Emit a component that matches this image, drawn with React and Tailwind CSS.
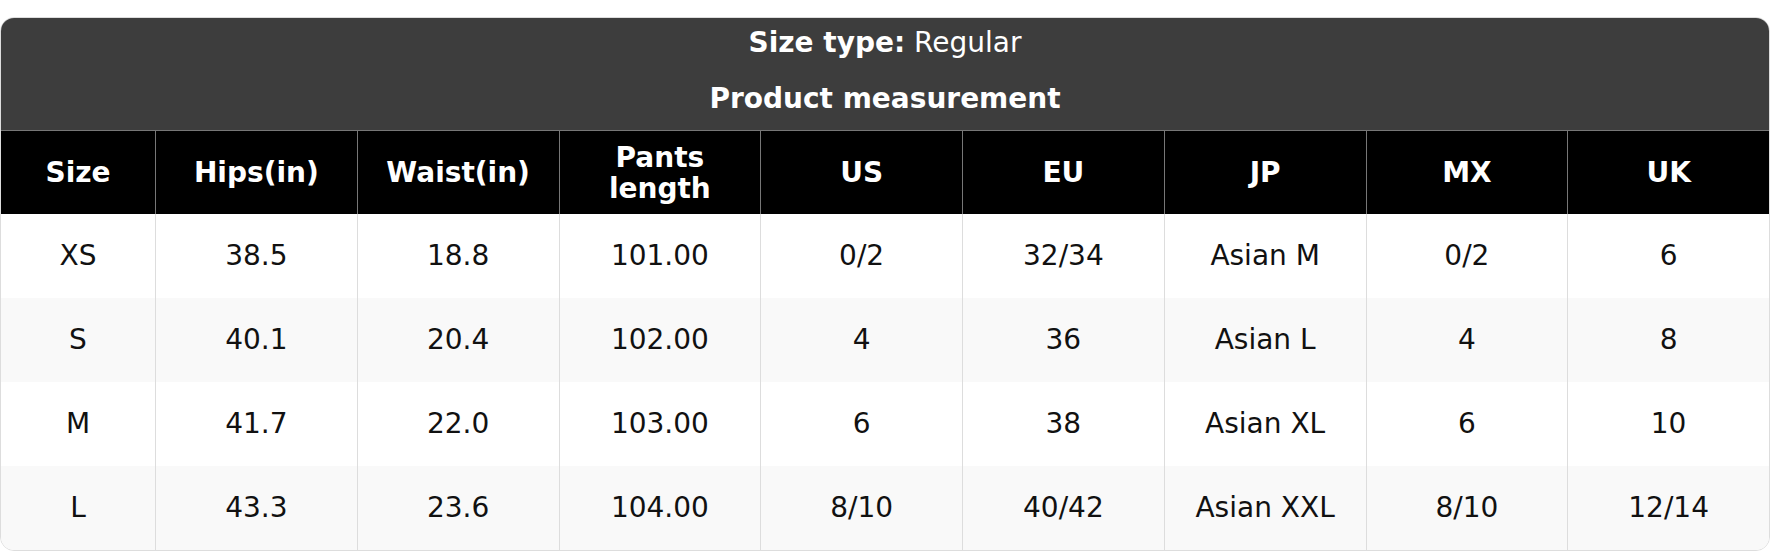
import React from 'react';

const headers = ['Size', 'Hips(in)', 'Waist(in)', 'Pants length', 'US', 'EU', 'JP', 'MX', 'UK'];

const rows = [
  ['XS', '38.5', '18.8', '101.00', '0/2', '32/34', 'Asian M', '0/2', '6'],
  ['S', '40.1', '20.4', '102.00', '4', '36', 'Asian L', '4', '8'],
  ['M', '41.7', '22.0', '103.00', '6', '38', 'Asian XL', '6', '10'],
  ['L', '43.3', '23.6', '104.00', '8/10', '40/42', 'Asian XXL', '8/10', '12/14'],
];

export default function App() {
  return (
    <div className="w-[1770px] h-[552px] bg-white pt-[17px] font-['DejaVu_Sans',sans-serif] text-[28px] leading-[32px]">
      <div className="rounded-[14px] overflow-hidden border border-[#dddddd]">
        <div className="bg-[#3d3d3d] text-white text-center pt-[9px] pb-[15px] flex flex-col gap-[24px]">
          <div>
            <span className="font-bold">Size type:</span> Regular
          </div>
          <div className="font-bold">Product measurement</div>
        </div>

        <div className="flex h-[84px] bg-black text-white font-bold border-t border-[#777777]">
          {headers.map((h, i) => (
            <div
              key={h}
              className={`flex items-center justify-center text-center px-2 leading-[31px] ${i === 0 ? 'w-[154px] shrink-0' : 'flex-1 border-l border-[#777777]'}`}
            >
              {h === 'Pants length' ? <span className="w-[110px]">Pants length</span> : h}
            </div>
          ))}
        </div>

        {rows.map((r, ri) => (
          <div key={r[0]} className={`flex h-[84px] text-[#111111] ${ri % 2 === 1 ? 'bg-[#f9f9f9]' : 'bg-white'}`}>
            {r.map((c, i) => (
              <div
                key={i}
                className={`flex items-center justify-center ${i === 0 ? 'w-[154px] shrink-0' : 'flex-1 border-l border-[#dddddd]'}`}
              >
                {c}
              </div>
            ))}
          </div>
        ))}
      </div>
    </div>
  );
}
